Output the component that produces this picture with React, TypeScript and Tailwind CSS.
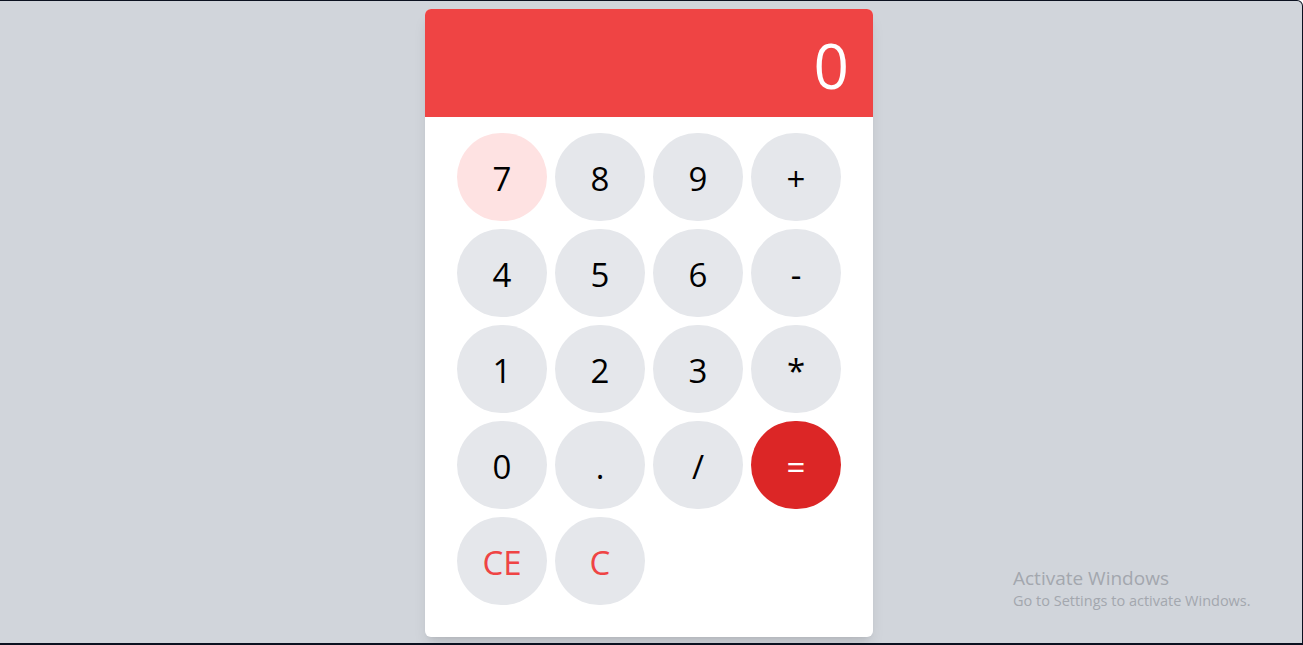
import React from 'react';

const keys: { label: string; kind?: 'active' | 'equals' | 'clear' }[] = [
  { label: '7', kind: 'active' },
  { label: '8' },
  { label: '9' },
  { label: '+' },
  { label: '4' },
  { label: '5' },
  { label: '6' },
  { label: '-' },
  { label: '1' },
  { label: '2' },
  { label: '3' },
  { label: '*' },
  { label: '0' },
  { label: '.' },
  { label: '/' },
  { label: '=', kind: 'equals' },
  { label: 'CE', kind: 'clear' },
  { label: 'C', kind: 'clear' },
];

const keyClass = (kind?: string) => {
  if (kind === 'active') return 'bg-[#fee2e2] text-black';
  if (kind === 'equals') return 'bg-[#dc2626] text-white';
  if (kind === 'clear') return 'bg-[#e5e7eb] text-[#ef4444]';
  return 'bg-[#e5e7eb] text-black';
};

export default function App() {
  return (
    <div
      className="relative h-[645px] w-full bg-[#d1d5db] border-t border-r border-b-2 border-[#0b1120] rounded-tr-md flex justify-center pt-2 pr-1 overflow-hidden"
      style={{ fontFamily: '"Open Sans", "Noto Sans", sans-serif' }}
    >
      {/* Calculator */}
      <div className="w-[448px] h-[628px] bg-white rounded-md shadow-lg overflow-hidden flex flex-col">
        <div className="h-[108px] bg-[#ef4444] flex items-center justify-end px-6 pt-1">
          <span className="text-[62px] text-white leading-none">0</span>
        </div>
        <div className="grid grid-cols-[repeat(4,90px)] gap-2 px-8 pt-4">
          {keys.map(k => (
            <button
              key={k.label}
              className={`w-[90px] h-[88px] rounded-full flex items-center justify-center pt-[3px] text-[33px] leading-none ${keyClass(k.kind)}`}
            >
              {k.label}
            </button>
          ))}
        </div>
      </div>

      {/* OS watermark */}
      <div className="absolute left-[1013px] top-[566px] text-[#a3a7ae] leading-tight">
        <div className="text-[19px]">Activate Windows</div>
        <div className="text-[14.5px] mt-[1px]">Go to Settings to activate Windows.</div>
      </div>
    </div>
  );
}
